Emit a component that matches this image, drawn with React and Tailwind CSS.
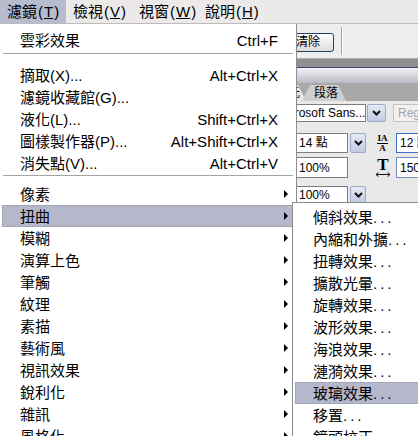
import { Fragment } from 'react';

const FONT = "font-['Liberation_Sans','Noto_Sans_CJK_TC',sans-serif]";

const topItems = [
  { label: '摘取(X)...', key: 'Alt+Ctrl+X' },
  { label: '濾鏡收藏館(G)...' },
  { label: '液化(L)...', key: 'Shift+Ctrl+X' },
  { label: '圖樣製作器(P)...', key: 'Alt+Shift+Ctrl+X' },
  { label: '消失點(V)...', key: 'Alt+Ctrl+V' },
];

const groups = ['像素', '扭曲', '模糊', '演算上色', '筆觸', '紋理', '素描', '藝術風', '視訊效果', '銳利化', '雜訊', '風格化'];

const distort = ['傾斜效果', '內縮和外擴', '扭轉效果', '擴散光暈', '旋轉效果', '波形效果', '海浪效果', '漣漪效果', '玻璃效果', '移置', '鏡頭校正'];

function Arrow() {
  return <span className="w-0 h-0 border-y-[4px] border-y-transparent border-l-[4px] border-l-black" />;
}

function Chevron() {
  return (
    <svg width="9" height="6" viewBox="0 0 9 6">
      <path d="M1 1l3.5 3.5L8 1" fill="none" stroke="#111" strokeWidth="2" />
    </svg>
  );
}

function DropButton({ className = '' }) {
  return (
    <div className={`flex shrink-0 items-center justify-center self-stretch bg-gradient-to-b from-[#e4e9f5] to-[#c2cbe2] border border-[#9eabc8] rounded-[2px] ${className}`}>
      <Chevron />
    </div>
  );
}

function MenuItem({ label, shortcut, arrow, active }) {
  return (
    <div className={`mx-[2px] h-[22px] flex items-center pl-[18px] ${arrow ? 'pr-[6px]' : 'pr-[16px]'} ${active ? 'bg-[#b5b8ca] ring-1 ring-inset ring-[#a2a6ba]' : ''}`}>
      <span className="flex-1 whitespace-nowrap">{label}</span>
      {shortcut && <span className="whitespace-nowrap">{shortcut}</span>}
      {arrow && <Arrow />}
    </div>
  );
}

function TopMenu({ name, k, active }) {
  return (
    <div className={`flex items-center w-[66px] pl-[7px] whitespace-nowrap ${active ? 'bg-[#b7bbce]' : ''}`}>
      {name}
      <span className="mx-[1px]">(</span>
      <span className="underline">{k}</span>
      <span className="mx-[1px]">)</span>
    </div>
  );
}

export default function App() {
  return (
    <div className={`relative w-[418px] h-[436px] overflow-hidden bg-[#e9e9e9] text-black text-[15px] leading-none ${FONT}`}>
      {/* menu bar */}
      <div className="flex h-[24px] bg-[#ebeae8] border-b border-[#bcbcbc]">
        <TopMenu name="濾鏡" k="T" active />
        <TopMenu name="檢視" k="V" />
        <TopMenu name="視窗" k="W" />
        <TopMenu name="說明" k="H" />
      </div>

      {/* options bar */}
      <div className="flex items-center h-[34px] bg-[#ededed] pl-[282px]">
        <div className="flex shrink-0 items-center justify-center w-[52px] h-[19px] mt-[2px] text-[12px] bg-gradient-to-b from-white to-[#dcdcdc] border border-[#263d6c] rounded-[3px]">
          清除
        </div>
        <div className="shrink-0 ml-[7px] w-[2px] h-[28px] border-l border-[#a3a3a3] bg-white" />
      </div>

      <div className="h-[9px] bg-[#8f8f8f] border-t border-[#b0b0b0]" />
      <div className="h-[16px] border-t border-[#41457e] bg-gradient-to-b from-[#f4f4f7] to-[#b8bac5]" />

      {/* tabs */}
      <div className="flex items-end h-[18px] bg-[#a8a8a8] pl-[250px] text-[12px]">
        <div className="flex shrink-0 items-center justify-end pr-[6px] w-[56px] h-[16px] bg-[#e6e6e6] [clip-path:polygon(0_0,calc(100%-8px)_0,100%_100%,0_100%)]">字元</div>
        <div className="flex shrink-0 items-center pl-[12px] w-[44px] h-[16px] -ml-[4px] bg-[#cfcfcf] [clip-path:polygon(8px_0,calc(100%-8px)_0,100%_100%,0_100%)]">段落</div>
      </div>

      {/* character panel */}
      <div className="flex flex-col pt-[3px] text-[12px]">
        <div className="flex h-[18px] pl-[262px]">
          <div className="flex shrink-0 items-center w-[104px] pl-[13px] bg-white border border-[#7d7d7d] whitespace-nowrap overflow-hidden">Microsoft Sans...</div>
          <DropButton className="ml-px w-[19px]" />
          <div className="flex shrink-0 items-center ml-[7px] w-[40px] pl-[4px] bg-[#f1f1f1] border border-[#c4c4c4] text-[#a3a3a3] whitespace-nowrap overflow-hidden">Regular</div>
        </div>
        <div className="flex items-center h-[20px] mt-[11px] pl-[270px]">
          <div className="flex shrink-0 items-center self-stretch w-[78px] pl-[28px] bg-white border border-[#7d7d7d]">14 點</div>
          <DropButton className="ml-[2px] w-[16px]" />
          <div className="flex shrink-0 flex-col items-center ml-[10px] w-[13px] font-['Liberation_Serif',serif] font-bold leading-none">
            <span className="text-[9px] border-b border-black">IA</span>
            <span className="text-[9px]">A</span>
          </div>
          <div className="flex shrink-0 items-center self-stretch ml-[7px] w-[40px] pl-[3px] bg-white border border-[#3f6fc4] whitespace-nowrap">12 點</div>
        </div>
        <div className="flex items-center h-[21px] mt-[4px] pl-[270px]">
          <div className="flex shrink-0 items-center self-stretch w-[78px] pl-[28px] bg-white border border-[#7d7d7d]">100%</div>
          <div className="flex shrink-0 flex-col items-center ml-[26px] w-[18px]">
            <span className="font-['Liberation_Serif',serif] font-bold text-[17px] leading-[14px]">T</span>
            <svg width="16" height="5" viewBox="0 0 16 5">
              <path d="M1 2.5h14M1 2.5l2.5-2M1 2.5l2.5 2M15 2.5l-2.5-2M15 2.5l-2.5 2" stroke="#111" strokeWidth="1" fill="none" />
            </svg>
          </div>
          <div className="flex shrink-0 items-center self-stretch ml-[4px] w-[40px] pl-[3px] bg-white border border-[#6f8cc0]">150</div>
        </div>
        <div className="flex h-[17px] mt-[8px] pl-[270px]">
          <div className="flex shrink-0 items-center w-[78px] pl-[28px] bg-white border border-[#7d7d7d]">100%</div>
          <DropButton className="ml-[2px] w-[16px]" />
        </div>
      </div>

      {/* filter menu */}
      <div className="absolute left-0 top-[24px] w-[297px] h-[420px] bg-white border-r border-[#8e8e8e] pt-[5px]">
        <MenuItem label="雲彩效果" shortcut="Ctrl+F" />
        <div className="h-[13px] pt-[2px] px-[3px]">
          <div className="h-px bg-[#a4a4a4]" />
        </div>
        {topItems.map((it) => (
          <MenuItem key={it.label} label={it.label} shortcut={it.key} />
        ))}
        <div className="h-[9px] pt-[1px] px-[3px]">
          <div className="h-px bg-[#a4a4a4]" />
        </div>
        {groups.map((g) => (
          <Fragment key={g}>
            <MenuItem label={g} arrow active={g === '扭曲'} />
          </Fragment>
        ))}
      </div>

      {/* distort submenu */}
      <div className="absolute left-[292px] top-[202px] w-[140px] h-[250px] bg-white border-l border-t border-[#8a8a8a] pt-[3px]">
        {distort.map((d) => (
          <MenuItem
            key={d}
            label={
              <>
                {d}
                <span className="tracking-[3px]">...</span>
              </>
            }
            active={d === '玻璃效果'}
          />
        ))}
      </div>
    </div>
  );
}
